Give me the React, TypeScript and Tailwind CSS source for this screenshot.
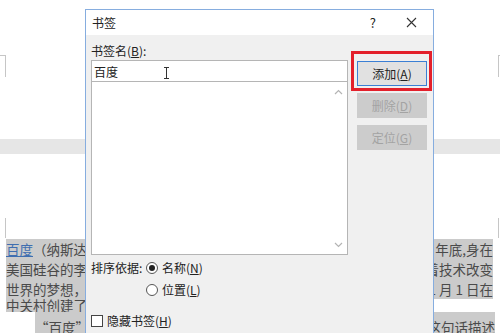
import { useState } from "react";

const cjk = { fontFamily: '"Noto Sans CJK SC", "Noto Sans", sans-serif' };

function Chevron({ up }: { up?: boolean }) {
  return (
    <svg width="9" height="6" viewBox="0 0 9 6" fill="none">
      <path
        d={up ? "M1 5 L4.5 1.5 L8 5" : "M1 1 L4.5 4.5 L8 1"}
        stroke="#b4b4b4"
        strokeWidth="1.2"
      />
    </svg>
  );
}

// 문서의 한 줄: 왼쪽/오른쪽 보이는 부분만
function Line({ left, right, h = "h-[20px]" }: { left: React.ReactNode; right?: string; h?: string }) {
  return (
    <div className={`flex justify-between items-center ml-[6px] mr-[7px] ${h}`}>
      <div className="w-[79px] overflow-hidden bg-[#cbcbcb] h-full flex items-center">{left}</div>
      {right ? (
        <div className="w-[59px] overflow-hidden bg-[#cbcbcb] h-full flex items-center justify-end">
          <span className="shrink-0">{right}</span>
        </div>
      ) : null}
    </div>
  );
}

export default function App() {
  const [name, setName] = useState("百度");
  const [sort, setSort] = useState("name");
  const [hidden, setHidden] = useState(false);

  return (
    <div className="relative w-[500px] h-[333px] overflow-hidden bg-white" style={cjk}>
      {/* 문서 배경 */}
      <div className="h-[55px]" />
      <div className="flex justify-between h-[22px]">
        <div className="w-[6px] border-t border-r border-[#c6c6c6]" />
        <div className="w-[2px] border-t border-l border-[#c6c6c6]" />
      </div>
      <div className="h-[62px]" />
      <div className="h-[15px] bg-[#e6e6e6]" />
      <div className="h-[64px]" />
      <div className="flex justify-between h-[20px]">
        <div className="w-[6px] border-r border-[#c6c6c6]" />
        <div className="w-[2px] border-l border-[#c6c6c6]" />
      </div>
      <div className="h-px" />
      <div className="text-[13.5px] text-[#4a4a4a] whitespace-nowrap">
        <Line
          left={
            <span className="shrink-0">
              <span className="text-[#3f6eb0] underline">百度</span>（纳斯达
            </span>
          }
          right="9 年底,身在"
        />
        <Line left={<span className="shrink-0">美国硅谷的李</span>} right="着技术改变" />
        <Line left={<span className="shrink-0">世界的梦想，</span>} right="1 月 1 日在" />
        <Line left={<span className="shrink-0 leading-[13px]">中关村创建了</span>} h="h-[13px]" />
        <div className="flex justify-between items-center h-[30px] ml-[35px] mr-[5px]">
          <div className="w-[50px] h-full overflow-hidden bg-[#cbcbcb] flex items-center">
            <span className="shrink-0">“百度”二</span>
          </div>
          <div className="w-[61px] h-full overflow-hidden bg-[#cbcbcb] flex items-center justify-end">
            <span className="shrink-0">这句话描述</span>
          </div>
        </div>
      </div>

      {/* 책갈피 대화상자 */}
      <div className="absolute left-[85px] top-[9px] w-[349px] h-[340px] border border-[#86addf] bg-[#f0f0f0] text-[12px] text-[#222]">
        <div className="flex items-center h-[25px] bg-white pl-[6px]">
          <span>书签</span>
          <span className="ml-auto mr-[30px] text-[13px]">?</span>
          <svg width="11" height="11" viewBox="0 0 11 11" className="mr-[16px]">
            <path d="M1 1 L10 10 M10 1 L1 10" stroke="#333" strokeWidth="1.1" />
          </svg>
        </div>

        <div className="flex pl-[5px]">
          <div className="w-[257px]">
            <div className="mt-[8px] h-[16px] leading-[16px]">
              书签名(<span className="underline">B</span>):
            </div>
            <input
              value={name}
              onChange={(e) => setName(e.target.value)}
              className="mt-px w-full h-[22px] border border-[#b5b5b5] bg-white px-[2px] text-[12px] outline-none"
            />
            <div className="relative -mt-px h-[174px] border border-[#b5b5b5] bg-white">
              <div className="absolute right-[4px] top-[7px]">
                <Chevron up />
              </div>
              <div className="absolute right-[4px] bottom-[6px]">
                <Chevron />
              </div>
            </div>

            <div className="flex items-center mt-[6px] h-[14px]">
              <span className="w-[55px] shrink-0">排序依据:</span>
              <button
                onClick={() => setSort("name")}
                className="flex items-center justify-center w-[12px] h-[12px] rounded-full border border-[#555] bg-white"
              >
                {sort === "name" && <span className="w-[6px] h-[6px] rounded-full bg-[#222]" />}
              </button>
              <span className="ml-[4px]">
                名称(<span className="underline">N</span>)
              </span>
            </div>
            <div className="flex items-center mt-[8px] h-[14px] pl-[55px]">
              <button
                onClick={() => setSort("pos")}
                className="flex items-center justify-center w-[12px] h-[12px] rounded-full border border-[#555] bg-white"
              >
                {sort === "pos" && <span className="w-[6px] h-[6px] rounded-full bg-[#222]" />}
              </button>
              <span className="ml-[4px]">
                位置(<span className="underline">L</span>)
              </span>
            </div>
            <div className="flex items-center mt-[17px] h-[14px]">
              <button
                onClick={() => setHidden((h) => !h)}
                className="flex items-center justify-center w-[12px] h-[12px] border border-[#444] bg-white text-[10px] leading-none"
              >
                {hidden ? "✓" : ""}
              </button>
              <span className="ml-[4px]">
                隐藏书签(<span className="underline">H</span>)
              </span>
            </div>
          </div>

          <div className="flex flex-col gap-[7px] ml-[9px] mt-[26px] w-[70px]">
            <button className="h-[25px] border border-[#3b7fd4] bg-[#e1e1e1] text-[#222]">
              添加(<span className="underline">A</span>)
            </button>
            <button disabled className="h-[25px] bg-[#cccccc] text-[#a3a3a3]">
              删除(<span className="underline">D</span>)
            </button>
            <button disabled className="h-[25px] bg-[#cccccc] text-[#a3a3a3]">
              定位(<span className="underline">G</span>)
            </button>
          </div>
        </div>

        {/* 빨간 강조 표시 */}
        <div className="absolute left-[265px] top-[41px] w-[81px] h-[40px] border-[3px] border-[#e3202b]" />

        {/* 텍스트 커서 */}
        <svg width="7" height="12" viewBox="0 0 7 12" className="absolute left-[77px] top-[57px]">
          <path d="M1 0.5 H6 M3.5 0.5 V11.5 M1 11.5 H6" stroke="#333" strokeWidth="1" />
        </svg>
      </div>
    </div>
  );
}
